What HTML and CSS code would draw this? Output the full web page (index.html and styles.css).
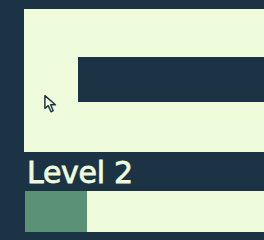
FILE: index.html
```html
<!DOCTYPE html>
<html lang="en">
<head>
    <meta charset="UTF-8">
    <title>Level</title>
    <link rel="stylesheet" href="styles.css">
</head>
<body>
    <div class="screen">
        <div class="panel">
            <div class="block"></div>
            <svg class="cursor" width="16" height="20" viewBox="0 0 14 18">
                <path d="M1.5 1.5 L1.5 13 L4.5 10.5 L7 16 L9 15 L6.7 9.7 L11 9.7 Z" fill="#effcdc" stroke="#1b3344" stroke-width="1.3" stroke-linejoin="round"/>
            </svg>
        </div>
        <div class="title">Level 2</div>
        <div class="bar">
            <div class="fill" style="width: 62px"></div>
        </div>
    </div>
</body>
</html>
```

FILE: styles.css
```css
body {
    margin: 0;
    width: 264px;
    height: 240px;
    overflow: hidden;
    background-color: #1b3344;
}

.screen {
    padding: 9px 0 0 24px;
}

.panel {
    position: relative;
    height: 143px;
    background-color: #effcdc;
    overflow: hidden;
}

.block {
    margin: 48px 0 0 54px;
    height: 45px;
    background-color: #1b3344;
}

.cursor {
    position: absolute;
    left: 19px;
    top: 85px;
}

.title {
    height: 39px;
    padding-left: 3px;
    font-family: "DejaVu Sans", sans-serif;
    font-size: 30px;
    line-height: 41px;
    color: #effcdc;
    letter-spacing: -0.3px;
    -webkit-text-stroke: 0.8px #effcdc;
}

.bar {
    display: flex;
    height: 41px;
    margin-left: 1px;
    background-color: #effcdc;
}

.fill {
    background-color: #5b9276;
}
```
